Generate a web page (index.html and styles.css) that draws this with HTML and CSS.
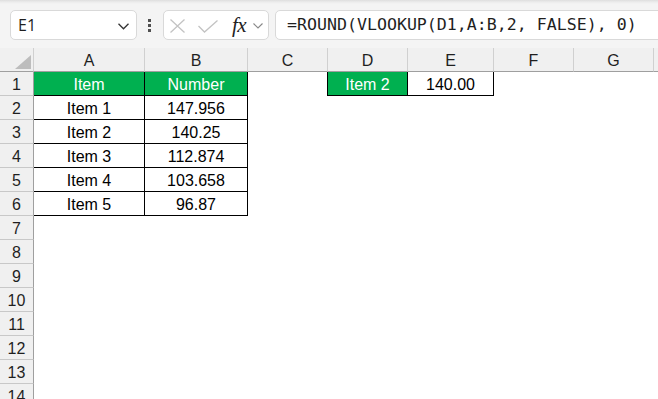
FILE: index.html
```html
<!DOCTYPE html>
<html>
<head>
<meta charset="utf-8">
<link rel="stylesheet" href="styles.css">
</head>
<body>
<div class="app">
  <div class="toolbar">
    <div class="namebox">
      <span class="name">E1</span>
      <svg class="nb-chev" width="11" height="7" viewBox="0 0 11 7"><polyline points="0.5,0.8 5.5,5.8 10.5,0.8" fill="none" stroke="#333" stroke-width="1.3"/></svg>
    </div>
    <div class="dots"><i></i><i></i><i></i></div>
    <div class="fbtns">
      <svg class="ic-x" width="15" height="14" viewBox="0 0 15 14"><path d="M0.5 0.5 L14.5 13.5 M14.5 0.5 L0.5 13.5" stroke="#c3c3c3" stroke-width="1.3" fill="none"/></svg>
      <svg class="ic-check" width="20" height="13" viewBox="0 0 20 13"><polyline points="0.5,6 6.5,12 19.5,0.5" fill="none" stroke="#c3c3c3" stroke-width="1.3"/></svg>
      <span class="fx">fx</span>
      <svg class="fx-chev" width="10" height="6" viewBox="0 0 10 6"><polyline points="0.5,0.5 5,5 9.5,0.5" fill="none" stroke="#888" stroke-width="1.1"/></svg>
    </div>
    <div class="formula">=ROUND(VLOOKUP(D1,A:B,2, FALSE), 0)</div>
  </div>
  <div class="sheet">
    <div class="hd corner"><svg width="16" height="14" viewBox="0 0 16 14"><polygon points="16,0 16,14 0,14" fill="#bdbdbd"/></svg></div>
    <div class="hd col">A</div><div class="hd col">B</div><div class="hd col">C</div><div class="hd col">D</div><div class="hd col">E</div><div class="hd col">F</div><div class="hd col">G</div><div class="hd col last"></div>

    <div class="hd row">1</div>
    <div class="c d g">Item</div><div class="c d g">Number</div><div class="c bl"></div><div class="c d g">Item 2</div><div class="c d">140.00</div><div class="c"></div><div class="c"></div><div class="c"></div>

    <div class="hd row">2</div>
    <div class="c d">Item 1</div><div class="c d">147.956</div><div class="c"></div><div class="c"></div><div class="c"></div><div class="c"></div><div class="c"></div><div class="c"></div>

    <div class="hd row">3</div>
    <div class="c d">Item 2</div><div class="c d">140.25</div><div class="c"></div><div class="c"></div><div class="c"></div><div class="c"></div><div class="c"></div><div class="c"></div>

    <div class="hd row">4</div>
    <div class="c d">Item 3</div><div class="c d">112.874</div><div class="c"></div><div class="c"></div><div class="c"></div><div class="c"></div><div class="c"></div><div class="c"></div>

    <div class="hd row">5</div>
    <div class="c d">Item 4</div><div class="c d">103.658</div><div class="c"></div><div class="c"></div><div class="c"></div><div class="c"></div><div class="c"></div><div class="c"></div>

    <div class="hd row">6</div>
    <div class="c d">Item 5</div><div class="c d">96.87</div><div class="c"></div><div class="c"></div><div class="c"></div><div class="c"></div><div class="c"></div><div class="c"></div>

    <div class="hd row">7</div><div class="c span"></div>
    <div class="hd row">8</div><div class="c span"></div>
    <div class="hd row">9</div><div class="c span"></div>
    <div class="hd row">10</div><div class="c span"></div>
    <div class="hd row">11</div><div class="c span"></div>
    <div class="hd row">12</div><div class="c span"></div>
    <div class="hd row">13</div><div class="c span"></div>
    <div class="hd row">14</div><div class="c span"></div>
  </div>
</div>
</body>
</html>
```

FILE: styles.css
```css
html, body {
  margin: 0;
  padding: 0;
  background: #ffffff;
}
body {
  width: 658px;
  height: 399px;
  overflow: hidden;
  font-family: "Liberation Sans", Arial, sans-serif;
}
.app {
  width: 658px;
  height: 399px;
  overflow: hidden;
}
.toolbar {
  height: 48px;
  box-sizing: border-box;
  display: flex;
  align-items: flex-start;
  padding: 10px 0 0 10px;
  background: linear-gradient(#dedede 0px, #ececec 2px, #f4f4f4 4px, #f4f4f4 100%);
}
.namebox {
  width: 127px;
  height: 30px;
  box-sizing: border-box;
  border: 1px solid #d9d9d9;
  border-radius: 5px;
  background: #fff;
  display: flex;
  align-items: center;
  justify-content: space-between;
  padding: 0 7px 0 7px;
  flex: none;
}
.name {
  font-family: "Open Sans", "Noto Sans", sans-serif;
  font-size: 16px;
  color: #1f1f1f;
  line-height: 20px;
}
.nb-chev {
  margin-top: 2px;
}
.dots {
  flex: none;
  margin-left: 11px;
  margin-top: 9px;
  display: flex;
  flex-direction: column;
  gap: 2px;
}
.dots i {
  display: block;
  width: 3px;
  height: 3px;
  background: #505050;
}
.fbtns {
  flex: none;
  margin-left: 12px;
  width: 106px;
  height: 30px;
  box-sizing: border-box;
  border: 1px solid #d9d9d9;
  border-radius: 5px;
  background: #fff;
  display: flex;
  align-items: center;
}
.ic-x {
  margin-left: 6px;
  margin-top: 2px;
}
.ic-check {
  margin-left: 13px;
  margin-top: 2px;
}
.fx {
  margin-left: 14px;
  font-family: "Liberation Serif", "DejaVu Serif", serif;
  font-style: italic;
  font-size: 21px;
  line-height: 20px;
  color: #222;
  letter-spacing: -0.5px;
}
.fx-chev {
  margin-left: 7px;
  margin-top: 2px;
}
.formula {
  flex: 1;
  margin-left: 6px;
  margin-right: -20px;
  height: 30px;
  box-sizing: border-box;
  border: 1px solid #d9d9d9;
  border-radius: 5px;
  background: #fff;
  padding-left: 11px;
  font-family: "DejaVu Sans Mono", "Liberation Mono", monospace;
  font-size: 16.6px;
  line-height: 28px;
  color: #1f1f1f;
  white-space: nowrap;
}
.sheet {
  display: grid;
  grid-template-columns: 34px 111px 103px 80px 80px 86px 80px 80px 1fr;
  grid-auto-rows: 24px;
  font-size: 16px;
}
.hd {
  background: #f0f0f0;
  box-sizing: border-box;
  color: #1f1f1f;
  display: flex;
  align-items: center;
  justify-content: center;
  font-size: 16px;
  padding-top: 2px;
}
.col {
  border-right: 1px solid #d0d0d0;
  border-bottom: 1px solid #9f9f9f;
}
.col.last {
  border-right: none;
}
.corner {
  border-right: 1px solid #d0d0d0;
  border-bottom: 1px solid #9f9f9f;
  justify-content: flex-end;
  align-items: flex-end;
  padding: 0 2px 2px 0;
}
.corner svg {
  display: block;
}
.row {
  border-right: 1px solid #9f9f9f;
  border-bottom: 1px solid #c8c8c8;
}
.c {
  box-sizing: border-box;
  display: flex;
  align-items: center;
  justify-content: center;
  color: #000;
  padding-top: 3px;
}
.d {
  border-right: 1px solid #000;
  border-bottom: 1px solid #000;
}
.bl {
  border-right: 1px solid #000;
}
.g {
  background: #00b050;
  color: #fff;
}
.span {
  grid-column: 2 / -1;
}
```
